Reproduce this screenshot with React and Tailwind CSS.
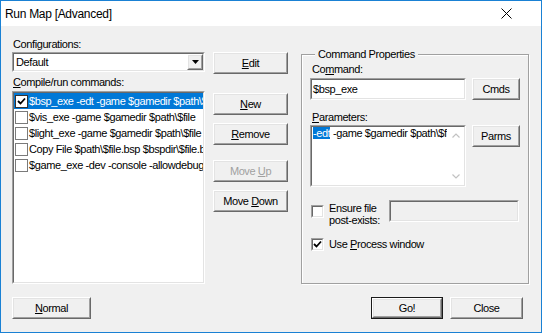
import React from 'react'

const sunkOuter = "border border-t-[#a0a0a0] border-l-[#a0a0a0] border-r-white border-b-white";
const sunkInner = "border border-t-[#696969] border-l-[#696969] border-r-[#e3e3e3] border-b-[#e3e3e3]";

function Btn({ className, children, disabled, def }) {
  return (
    <div className={`${className} ${def ? "border border-[#1a1a1a]" : ""}`}>
      <div className="h-full border border-t-white border-l-white border-r-[#696969] border-b-[#696969]">
        <div className="h-full flex items-center justify-center border border-t-[#e3e3e3] border-l-[#e3e3e3] border-r-[#a0a0a0] border-b-[#a0a0a0] bg-[#f0f0f0]">
          <span className={disabled ? "text-[#a0a0a0]" : "text-black"}>{children}</span>
        </div>
      </div>
    </div>
  );
}

function Check() {
  return (
    <svg width="9" height="9" viewBox="0 0 9 9" className="block">
      <path d="M1 4 L3.5 6.5 L8 1.5" fill="none" stroke="#000" strokeWidth="1.8" />
    </svg>
  );
}

function ListCheck({ checked }) {
  return (
    <div className={`w-[13px] h-[13px] shrink-0 bg-white border flex items-center justify-center ${checked ? "border-[#333333]" : "border-[#7a7a7a]"}`}>
      {checked && <Check />}
    </div>
  );
}

function SunkCheck({ checked }) {
  return (
    <div className={`w-[13px] h-[13px] shrink-0 ${sunkOuter}`}>
      <div className={`h-full bg-white flex items-center justify-center ${sunkInner}`}>
        {checked && <Check />}
      </div>
    </div>
  );
}

const commands = [
  { text: "$bsp_exe -edt -game $gamedir $path\\$file", checked: true, selected: true },
  { text: "$vis_exe -game $gamedir $path\\$file", checked: false },
  { text: "$light_exe -game $gamedir $path\\$file", checked: false },
  { text: "Copy File $path\\$file.bsp $bspdir\\$file.bsp", checked: false },
  { text: "$game_exe -dev -console -allowdebug +map $file", checked: false },
];

function Chevron({ down }) {
  return (
    <svg width="8" height="5" viewBox="0 0 8 5" className="block">
      <polyline
        points={down ? "0.5,0.5 4,4 7.5,0.5" : "0.5,4.5 4,1 7.5,4.5"}
        fill="none"
        stroke="#c2c2c2"
        strokeWidth="1.2"
      />
    </svg>
  );
}

export default function App() {
  return (
    <div className="w-[542px] h-[333px] border border-[#1a81d4] flex flex-col bg-white font-['Liberation_Sans',Arial,sans-serif] text-[11px] leading-[13px] tracking-[-0.4px] text-black">
      {/* title bar */}
      <div className="h-[25px] shrink-0 flex items-center justify-between pl-[4px] pr-[29px] bg-white">
        <span className="text-[12px] leading-[16px] tracking-[-0.3px]">Run Map [Advanced]</span>
        <svg width="11" height="11" viewBox="0 0 11 11" className="block">
          <path d="M0.5 0.5 L10.5 10.5 M10.5 0.5 L0.5 10.5" stroke="#000" strokeWidth="1" />
        </svg>
      </div>

      {/* body */}
      <div className="flex-1 bg-[#f0f0f0] flex flex-col pl-[11px]">
        <div className="flex items-start">
          {/* left column */}
          <div className="w-[193px] pt-[12px] flex flex-col">
            <div className="h-[13px] pl-[1px]">Configurations:</div>
            <div className={`mt-[1px] h-[20px] ${sunkOuter}`}>
              <div className={`h-full bg-white flex items-center ${sunkInner}`}>
                <span className="flex-1 pl-[2px]">Default</span>
                <div className="w-[16px] h-full border border-t-white border-l-white border-r-[#696969] border-b-[#696969]">
                  <div className="h-full flex items-center justify-center bg-[#f0f0f0] border border-t-[#e3e3e3] border-l-[#e3e3e3] border-r-[#a0a0a0] border-b-[#a0a0a0]">
                    <svg width="7" height="4" viewBox="0 0 7 4" className="block">
                      <polygon points="0,0 7,0 3.5,4" fill="#000" />
                    </svg>
                  </div>
                </div>
              </div>
            </div>
            <div className="mt-[4px] h-[13px] pl-[1px]">
              <u>C</u>ompile/run commands:
            </div>
            <div className={`mt-[2px] h-[193px] ${sunkOuter}`}>
              <div className={`h-full bg-white overflow-hidden ${sunkInner}`}>
                {commands.map((c, i) => (
                  <div
                    key={i}
                    className={`h-[16px] flex items-center pl-[1px] whitespace-nowrap ${c.selected ? "bg-[#0078d7] text-white" : ""}`}
                  >
                    <ListCheck checked={c.checked} />
                    <span className="pl-[1px]">{c.text}</span>
                  </div>
                ))}
              </div>
            </div>
          </div>

          {/* middle buttons */}
          <div className="ml-[8px] w-[75px] pt-[26px] flex flex-col">
            <Btn className="h-[22px]"><u>E</u>dit</Btn>
            <Btn className="h-[22px] mt-[19px]"><u>N</u>ew</Btn>
            <Btn className="h-[22px] mt-[8px]"><u>R</u>emove</Btn>
            <Btn className="h-[22px] mt-[15px]" disabled>Move <u>U</u>p</Btn>
            <Btn className="h-[22px] mt-[8px]">Move <u>D</u>own</Btn>
          </div>

          {/* command properties */}
          <fieldset className="ml-[13px] mt-[22px] w-[228px] h-[236px] border border-[#a0a0a0] shadow-[inset_1px_1px_0_#fff,1px_1px_0_#fff] pl-[8px]">
            <legend className="ml-[5px] px-[3px] bg-[#f0f0f0] leading-[13px]">Command Properties</legend>
            <div className="mt-[2px] h-[13px] pl-[2px]">
              Co<u>m</u>mand:
            </div>
            <div className="mt-[2px] flex">
              <div className={`w-[156px] h-[22px] ${sunkOuter}`}>
                <div className={`h-full bg-white flex items-center pl-[1px] ${sunkInner}`}>$bsp_exe</div>
              </div>
              <Btn className="ml-[6px] w-[48px] h-[22px]">Cmds</Btn>
            </div>
            <div className="mt-[11px] h-[13px] pl-[2px]">
              <u>P</u>arameters:
            </div>
            <div className="mt-[1px] flex items-start">
              <div className={`w-[156px] h-[62px] ${sunkOuter}`}>
                <div className={`h-full bg-white flex ${sunkInner}`}>
                  <div className="flex-1 overflow-hidden whitespace-nowrap pl-[1px]">
                    <span className="bg-[#0078d7] text-white">-edt</span> -game $gamedir $path\$file
                  </div>
                  <div className="w-[17px] flex flex-col justify-between items-center py-[6px]">
                    <Chevron />
                    <Chevron down />
                  </div>
                </div>
              </div>
              <Btn className="ml-[6px] w-[48px] h-[22px]">Parms</Btn>
            </div>
            <div className="mt-[13px] h-[22px] flex items-start">
              <div className="ml-[1px] mt-[5px]">
                <SunkCheck />
              </div>
              <div className="ml-[5px] mt-[2px] w-[60px] leading-[12px]">
                Ensure file<br />post-exists:
              </div>
              <div className={`w-[130px] h-[22px] ${sunkOuter}`}>
                <div className={`h-full bg-[#f0f0f0] ${sunkInner}`} />
              </div>
            </div>
            <div className="mt-[16px] flex items-center">
              <div className="ml-[1px]">
                <SunkCheck checked />
              </div>
              <span className="ml-[5px]">Use <u>P</u>rocess window</span>
            </div>
          </fieldset>
        </div>

        {/* bottom buttons */}
        <div className="mt-[13px] flex justify-between pr-[18px]">
          <Btn className="w-[79px] h-[22px]"><u>N</u>ormal</Btn>
          <div className="flex">
            <Btn className="w-[72px] h-[22px]" def>Go!</Btn>
            <Btn className="ml-[7px] w-[73px] h-[22px]">Close</Btn>
          </div>
        </div>
      </div>
    </div>
  );
}
